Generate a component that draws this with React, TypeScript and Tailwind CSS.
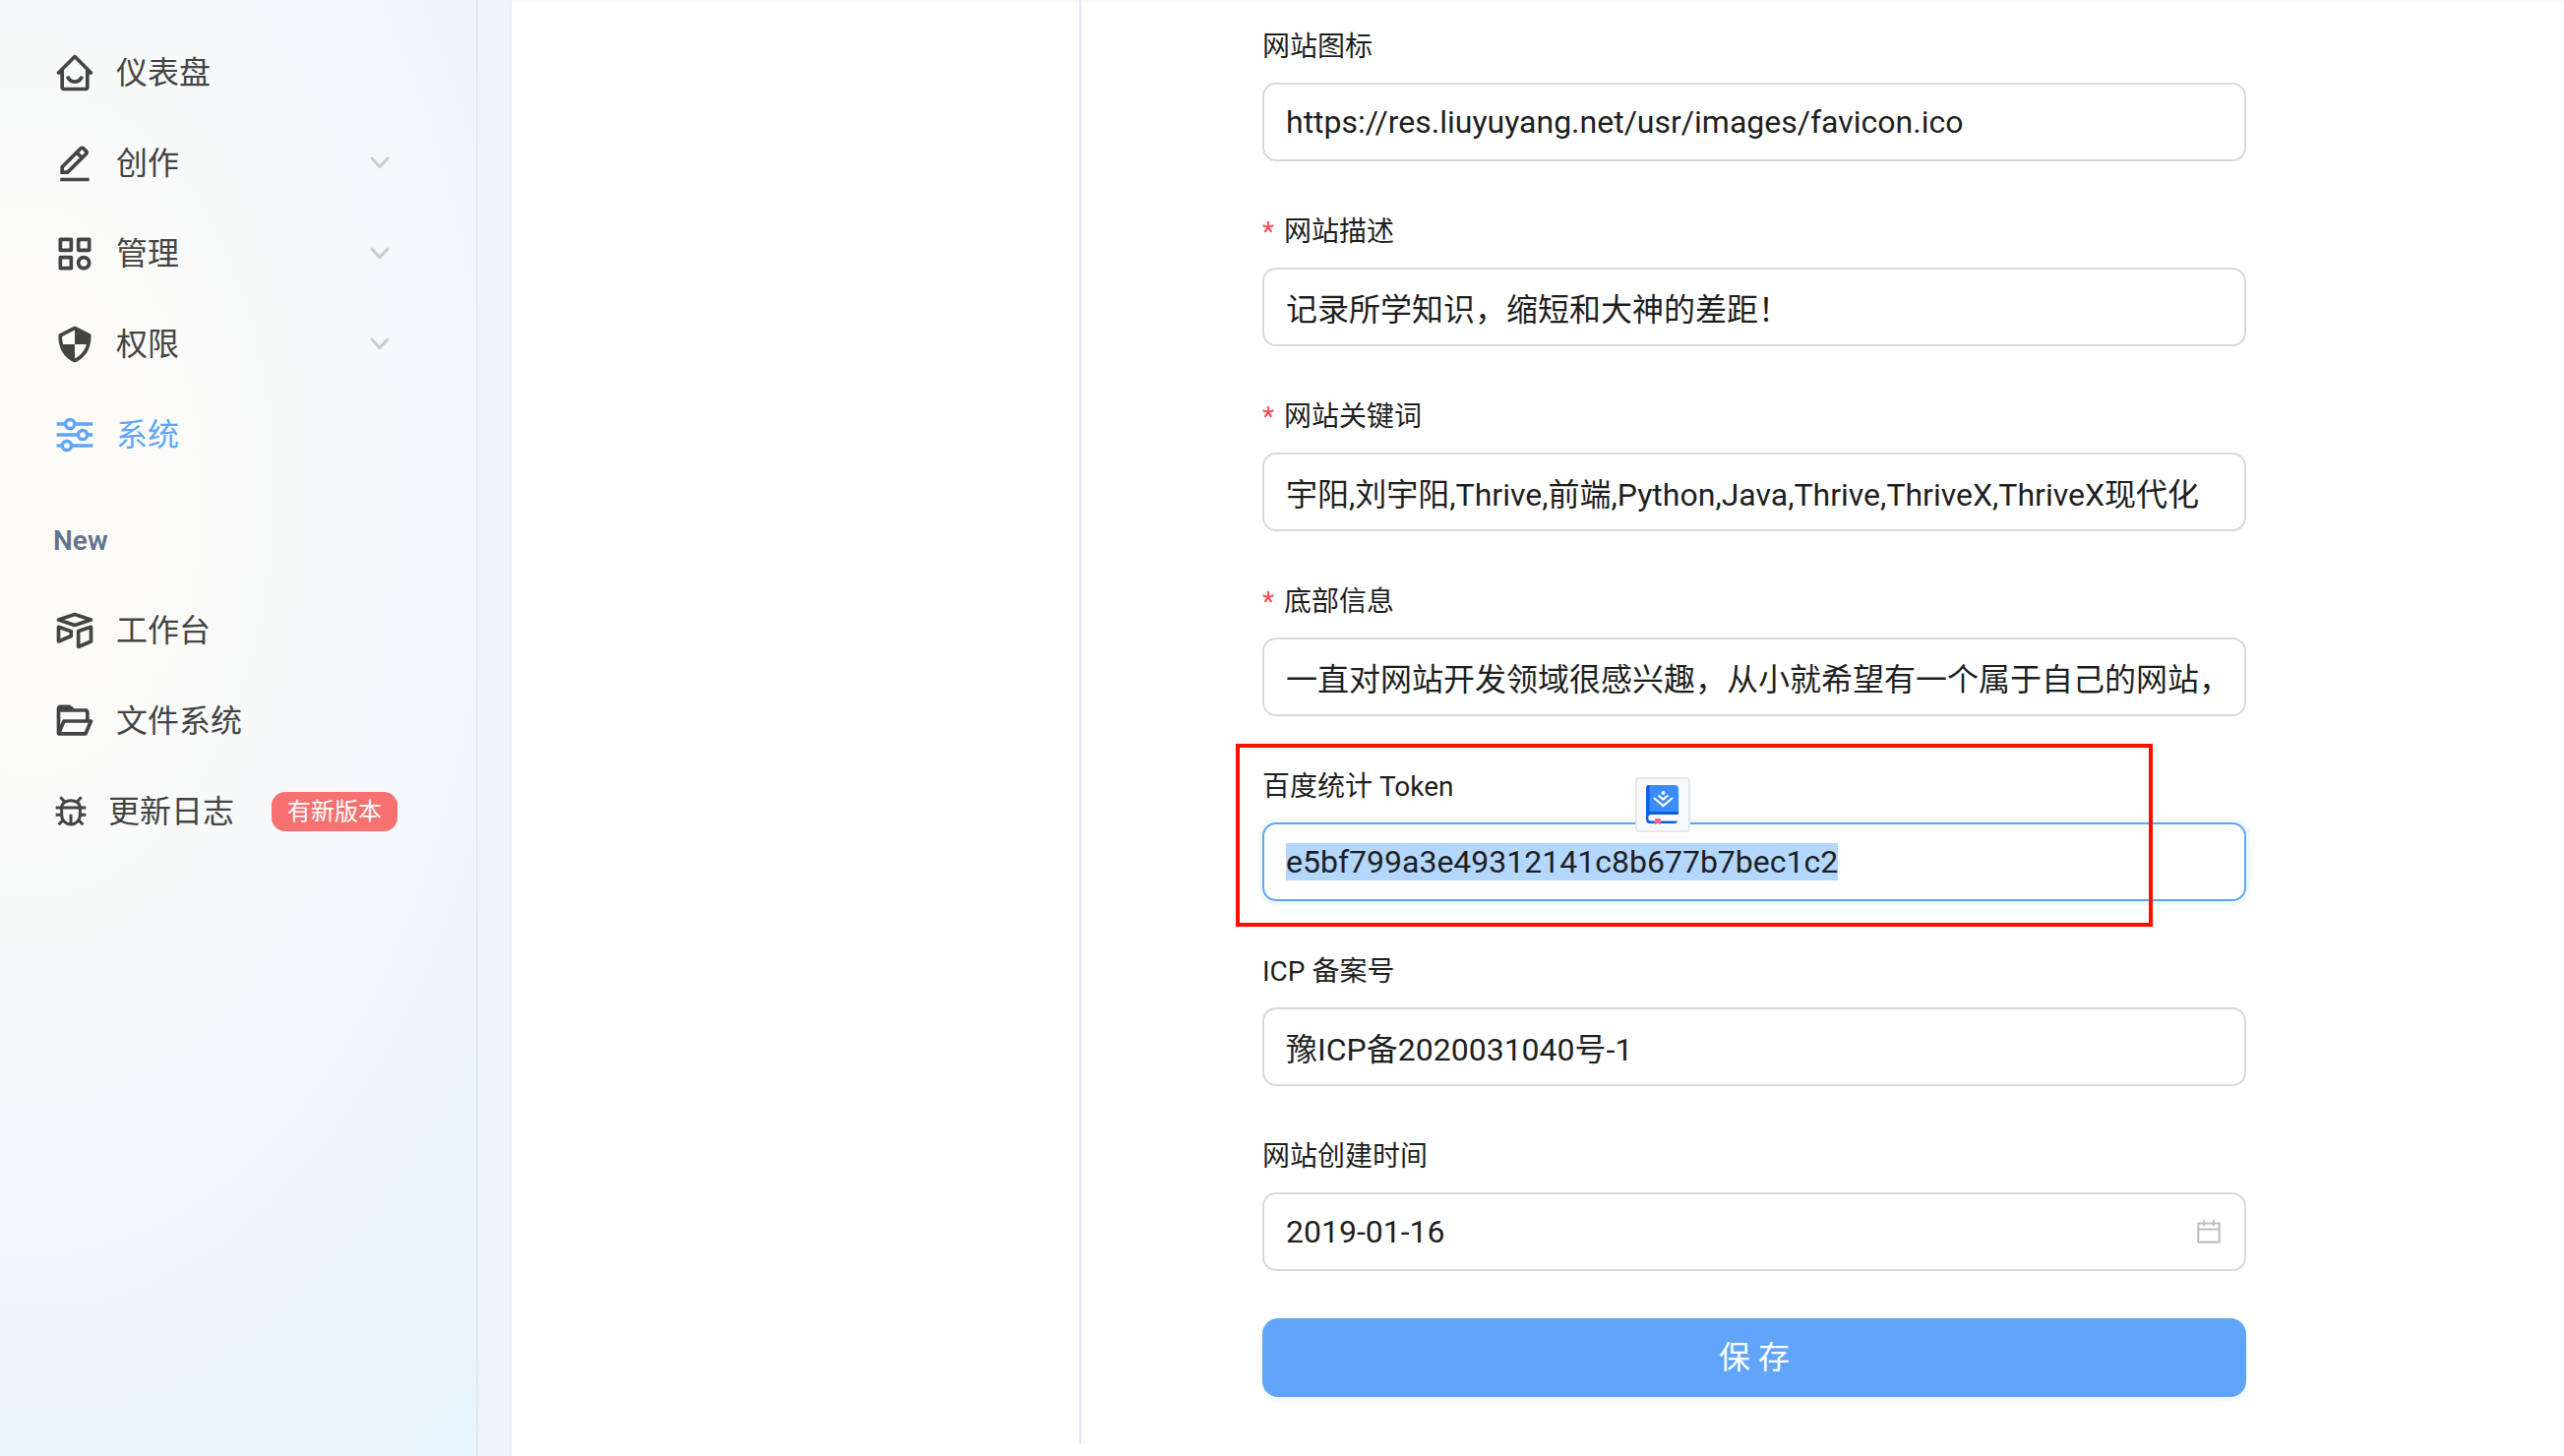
import type { ReactNode } from "react";
import { BiHomeSmile, BiEditAlt, BiCategory, BiShieldQuarter, BiFolderOpen } from "react-icons/bi";
import { TbBrandAirtable } from "react-icons/tb";
import { AiOutlineCalendar } from "react-icons/ai";

function SlidersIcon({ className }: { className?: string }) {
  return (
    <svg viewBox="0 0 24 24" className={className} fill="none" stroke="currentColor" strokeWidth="1.9" aria-hidden="true">
      <path d="M2 6h4.900M11.900 6H22M2 12h11.900M18.900 12H22M2 18h3.100M10.100 18H22" />
      <circle cx="9.400" cy="6" r="2.500" />
      <circle cx="16.400" cy="12" r="2.500" />
      <circle cx="7.600" cy="18" r="2.500" />
    </svg>
  );
}

function BugIcon({ className }: { className?: string }) {
  return (
    <svg viewBox="0 0 96 96" className={className} fill="none" stroke="currentColor" strokeWidth="9" aria-hidden="true">
      <path d="M20 36C20 22 34 14 48 14s28 8 28 22v22c0 18-14 29-28 29S20 76 20 58z" />
      <path d="M2 36h92M2 58h18M76 58h18M48 56v32M16 4l14 15M80 4L66 19M11 88l13-14M85 88L72 74" />
    </svg>
  );
}

function Chevron() {
  return (
    <svg viewBox="0 0 24 24" className="size-6" fill="none" stroke="#cbcbcb" strokeWidth="3" strokeLinecap="round" strokeLinejoin="round" aria-hidden="true">
      <path d="M4 7l8 8.500L20 7" />
    </svg>
  );
}

function BookIcon() {
  return (
    <svg viewBox="0 0 40 44" className="h-11 w-10" aria-hidden="true">
      <path d="M6 2h26a4 4 0 0 1 4 4v25H8l-5-1V5a3 3 0 0 1 3-3z" fill="#3b8cff" />
      <path d="M3 6a4 4 0 0 1 3.500-4v30L3 35z" fill="#0c5fe0" />
      <path d="M3 33a5 5 0 0 1 5-4h28v2.500l-1 6.500a3 3 0 0 1-3 3H7a4 4 0 0 1-4-4z" fill="#0c5fe0" />
      <path d="M8.500 32H36v6.500H8.500a3.200 3.200 0 0 1 0-6.500z" fill="#fff" />
      <path d="M12 36h6v6l-3-1-3 1z" fill="#ff6b81" />
      <path d="M11 15l9.500 8 9.500-8M15.500 12.500l5 4 5-4" fill="none" stroke="#fff" strokeWidth="2.200" />
      <circle cx="20.500" cy="10" r="2" fill="#fff" />
    </svg>
  );
}

type NavItem = { label: string; icon: ReactNode; expandable?: boolean; active?: boolean };

const mainItems: NavItem[] = [
  { label: "仪表盘", icon: <BiHomeSmile className="size-11" /> },
  { label: "创作", icon: <BiEditAlt className="size-11" />, expandable: true },
  { label: "管理", icon: <BiCategory className="size-11" />, expandable: true },
  { label: "权限", icon: <BiShieldQuarter className="size-11" />, expandable: true },
  { label: "系统", icon: <SlidersIcon className="size-11" />, active: true },
];

function NavLink({ item }: { item: NavItem }) {
  return (
    <li>
      <a href="#" className={`flex h-16 items-center gap-5 ${item.active ? "text-[#60a5fa]" : "text-[#444]"}`}>
        {item.icon}
        <span className="flex-1">{item.label}</span>
        {item.expandable && <Chevron />}
      </a>
    </li>
  );
}

function Sidebar() {
  return (
    <aside className="w-[486px] shrink-0 border-r-2 border-slate-200 bg-[radial-gradient(600px_1000px_at_30px_500px,#fffcf6_0%,#fafaf9_30%,#f6f9fa_52%,#eff6fa_85%,#e7f4fe_125%)] pt-[42px] pr-[86px] pl-[54px] text-[32px] leading-[48px]">
      <nav>
        <ul className="flex flex-col gap-7">
          {mainItems.map((item) => (
            <NavLink key={item.label} item={item} />
          ))}
        </ul>
        <h3 className="mt-[55px] text-[28px] leading-[42px] font-semibold text-slate-500">New</h3>
        <ul className="mt-[38px] flex flex-col gap-7">
          <NavLink item={{ label: "工作台", icon: <TbBrandAirtable className="size-11" /> }} />
          <NavLink item={{ label: "文件系统", icon: <BiFolderOpen className="size-11" /> }} />
          <li>
            <a href="#" className="flex h-16 items-center text-[#444]">
              <BugIcon className="mr-[22px] ml-0.5 size-8 shrink-0" />
              <span className="whitespace-nowrap">更新日志</span>
              <span className="-mr-4 ml-[38px] rounded-[14px] bg-[#f87171] px-4 text-2xl leading-10 whitespace-nowrap text-white">有新版本</span>
            </a>
          </li>
        </ul>
      </nav>
    </aside>
  );
}

const inputClass =
  "h-20 w-full rounded-[14px] border-2 bg-white px-[22px] text-[32px] leading-[48px] text-[#1f1f1f] outline-none";

function Field({ id, label, value, required }: { id: string; label: string; value: string; required?: boolean }) {
  return (
    <div>
      <FieldLabel id={id} label={label} required={required} />
      <input id={id} type="text" defaultValue={value} className={`${inputClass} border-[#d9d9d9]`} />
    </div>
  );
}

function FieldLabel({ id, label, required }: { id: string; label: string; required?: boolean }) {
  return (
    <label htmlFor={id} className="mb-3.5 flex h-[46px] items-end gap-2.5 text-[28px] leading-[44px]">
      {required && <span className="text-[#ff4d4f]">*</span>}
      {label}
    </label>
  );
}

function TokenField() {
  return (
    <div className="relative">
      <FieldLabel id="token" label="百度统计 Token" />
      <input
        id="token"
        type="text"
        autoFocus
        onFocus={(e) => e.currentTarget.select()}
        defaultValue="e5bf799a3e49312141c8b677b7bec1c2"
        className={`${inputClass} border-[#60a5fa] shadow-[0_0_0_4px_#f2f8ff] selection:bg-[#b3d7ff] selection:text-[#1f1f1f]`}
      />
      <button type="button" aria-label="翻译" className="absolute top-3.5 left-[379px] flex size-14 items-center justify-center rounded-sm border-2 border-[#e4e7ec] bg-[#f7f9fb]">
        <BookIcon />
      </button>
      <div className="pointer-events-none absolute -top-5 -left-[27px] h-[186px] w-[932px] border-4 border-[#ff0d00]" />
    </div>
  );
}

export default function App() {
  return (
    <div className="flex min-h-screen bg-slate-100 font-[Roboto,'Noto_Sans_CJK_SC',sans-serif] text-[#1f1f1f]">
      <Sidebar />
      <main className="ml-8 flex flex-1 border-l-2 border-[#eeeff3] bg-white shadow-[inset_0_4px_4px_-3px_#f3f3f3]">
        <section className="mb-3 w-[579px] shrink-0 border-r-2 border-slate-200" />
        <form className="ml-[184px] flex w-[1000px] flex-col gap-12 pt-6" onSubmit={(e) => e.preventDefault()}>
          <Field id="favicon" label="网站图标" value="https://res.liuyuyang.net/usr/images/favicon.ico" />
          <Field id="description" label="网站描述" value="记录所学知识，缩短和大神的差距！" required />
          <Field id="keywords" label="网站关键词" value="宇阳,刘宇阳,Thrive,前端,Python,Java,Thrive,ThriveX,ThriveX现代化" required />
          <Field id="footer" label="底部信息" value="一直对网站开发领域很感兴趣，从小就希望有一个属于自己的网站，" required />
          <TokenField />
          <Field id="icp" label="ICP 备案号" value="豫ICP备2020031040号-1" />
          <div>
            <FieldLabel id="created" label="网站创建时间" />
            <div className="relative">
              <input id="created" type="text" defaultValue="2019-01-16" className={`${inputClass} border-[#d9d9d9]`} />
              <AiOutlineCalendar className="absolute top-[25px] right-[23px] size-[30px] text-[#bfbfbf]" />
            </div>
          </div>
          <button type="submit" className="h-20 rounded-2xl bg-[#60a5fa] text-[32px] text-white shadow-[0_4px_0_#f2f8ff]">
            保 存
          </button>
        </form>
      </main>
    </div>
  );
}
